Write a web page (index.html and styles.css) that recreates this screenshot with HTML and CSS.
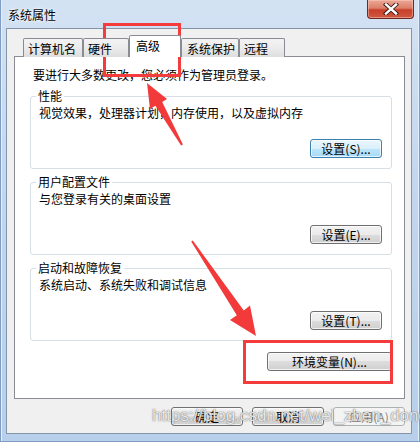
FILE: index.html
```html
<!DOCTYPE html>
<html lang="zh-CN">
    <head>
        <meta charset="UTF-8">
        <title>系统属性</title>
        <link rel="stylesheet" href="styles.css">
    </head>
    <body>
        <div class="window">
            <div class="titlebar">
                <span class="title">系统属性</span>
                <div class="close">
                    <svg width="16" height="12" viewBox="0 0 16 12">
                        <path d="M3 1.5 L13 10.5 M13 1.5 L3 10.5" stroke="#3a1a14" stroke-width="4.2" stroke-linecap="square"/>
                        <path d="M3 1.5 L13 10.5 M13 1.5 L3 10.5" stroke="#ffffff" stroke-width="2.4" stroke-linecap="square"/>
                    </svg>
                </div>
            </div>

            <div class="client">
                <div class="tabs">
                    <div class="tab t1">计算机名</div>
                    <div class="tab t2">硬件</div>
                    <div class="tab t3 active">高级</div>
                    <div class="tab t4">系统保护</div>
                    <div class="tab t5">远程</div>
                </div>

                <div class="panel">
                    <p class="intro">要进行大多数更改，您必须作为管理员登录。</p>

                    <div class="group">
                        <span class="group-title">性能</span>
                        <p class="group-text">视觉效果，处理器计划，内存使用，以及虚拟内存</p>
                        <button class="btn hot">设置(S)...</button>
                    </div>

                    <div class="group">
                        <span class="group-title">用户配置文件</span>
                        <p class="group-text">与您登录有关的桌面设置</p>
                        <button class="btn">设置(E)...</button>
                    </div>

                    <div class="group">
                        <span class="group-title">启动和故障恢复</span>
                        <p class="group-text">系统启动、系统失败和调试信息</p>
                        <button class="btn">设置(T)...</button>
                    </div>

                    <button class="btn env">环境变量(N)...</button>
                </div>

                <div class="footer">
                    <button class="btn">确定</button>
                    <button class="btn">取消</button>
                    <button class="btn disabled">应用(A)</button>
                </div>
            </div>

            <div class="watermark">https://blog.csdn.net/wei_zhen_dong</div>

            <!-- пометки поверх окна -->
            <svg class="marks" width="420" height="442" viewBox="0 0 420 442">
                <rect x="104.5" y="24.5" width="75" height="51" fill="none" stroke="#f53c3c" stroke-width="3"/>
                <rect x="244.5" y="341.5" width="147" height="41" fill="none" stroke="#f53c3c" stroke-width="3"/>
                <polygon fill="#f23a3a" points="147,83 167,99 162.2,102 182.9,144.5 181.1,145.5 155.4,105.8 150,109"/>
                <polygon fill="#f23a3a" points="256,336 250,305.5 243.8,310.4 192.8,240.4 191.2,241.6 236.8,315.2 230,320"/>
            </svg>
        </div>
    </body>
</html>
```

FILE: styles.css
```css
body {
    margin: 0;
    font-family: "Noto Sans CJK SC", sans-serif;
    font-size: 12px;
    background-color: #ffffff;
}
.window {
    position: relative;
    width: 420px;
    height: 442px;
    box-sizing: border-box;
    padding: 0 8px 8px 6px;
    display: flex;
    flex-direction: column;
    background: linear-gradient(180deg, #d3e2f3 0%, #c3d7ee 40%, #b7cfea 100%);
    box-shadow: inset 1px 0 0 #7f9dc2, inset -1px 0 0 #7f9dc2, inset 0 -1px 0 #7f9dc2, inset 2px 0 0 #e6eff9, inset -2px 0 0 #e6eff9;
}
.titlebar {
    height: 28px;
    flex: none;
    display: flex;
    justify-content: space-between;
    align-items: flex-start;
}
.title {
    margin: 7px 0 0 2px;
    line-height: 16px;
    color: #000;
    text-shadow: 0 0 4px #ffffff, 0 0 2px #ffffff;
}
.close {
    width: 47px;
    height: 19px;
    box-sizing: border-box;
    margin-right: -2px;
    border: 1px solid #6e2a22;
    border-top: none;
    border-radius: 0 0 4px 4px;
    background: linear-gradient(180deg, #eaa897 0%, #dc7f69 45%, #c8402a 55%, #cf5a3f 100%);
    box-shadow: inset 0 0 0 1px rgba(255, 210, 200, 0.45);
    display: flex;
    justify-content: center;
    align-items: center;
}
.client {
    flex: 1;
    display: flex;
    flex-direction: column;
    background-color: #f0f0f0;
    border: 1px solid #8495a9;
    padding: 7px 6px 0 7px;
}
.tabs {
    display: flex;
    align-items: flex-end;
    height: 21px;
    padding-left: 9px;
    margin-bottom: -1px;
    position: relative;
    z-index: 1;
}
.tab {
    height: 19px;
    box-sizing: border-box;
    border: 1px solid #898c95;
    border-bottom: none;
    border-radius: 2px 2px 0 0;
    padding: 2px 0 0 4px;
    line-height: 16px;
    background: linear-gradient(180deg, #f3f3f3 0%, #ebebeb 50%, #dedede 100%);
}
.t1 { width: 60px; }
.t2 { width: 46px; }
.t3 { width: 52px; }
.t4 { width: 58px; padding-left: 5px; }
.t5 { width: 46px; }
.tab.active {
    height: 22px;
    padding: 2px 0 0 6px;
    background: #ffffff;
    border-color: #898c95;
}
.panel {
    height: 343px;
    flex: none;
    box-sizing: border-box;
    border: 1px solid #898c95;
    background-color: #ffffff;
    padding: 10px 12px 0 15px;
    display: flex;
    flex-direction: column;
}
.intro {
    margin: 0 0 13px 3px;
    line-height: 16px;
}
.group {
    height: 73px;
    box-sizing: border-box;
    border: 1px solid #d5dfe5;
    border-radius: 3px;
    padding: 0 9px 0 8px;
    margin-bottom: 13px;
    display: flex;
    flex-direction: column;
}
.group-title {
    align-self: flex-start;
    margin: -9px 0 0 -3px;
    padding: 0 2px;
    line-height: 16px;
    background-color: #ffffff;
}
.group-text {
    margin: 1px 0 0 0;
    line-height: 16px;
}
.btn {
    font-family: "Noto Sans CJK SC", sans-serif;
    font-size: 12px;
    line-height: 16px;
    height: 19px;
    width: 72px;
    box-sizing: border-box;
    padding: 0;
    color: #000;
    border: 1px solid #707070;
    border-radius: 3px;
    background: linear-gradient(180deg, #f2f2f2 0%, #ebebeb 50%, #dddddd 50%, #cfcfcf 100%);
    box-shadow: inset 0 0 0 1px rgba(255, 255, 255, 0.7);
}
.group .btn {
    align-self: flex-end;
    margin-top: 18px;
}
.btn.hot {
    border-color: #3c7fb1;
    background: linear-gradient(180deg, #eaf6fd 0%, #d9f0fc 50%, #bee6fd 50%, #a7d9f5 100%);
}
.btn.env {
    align-self: flex-end;
    width: 125px;
    margin: -2px 0 0 0;
}
.btn.disabled {
    color: #838383;
    border-color: #adb2b5;
    background: #f4f4f4;
    box-shadow: none;
}
.footer {
    display: flex;
    justify-content: flex-end;
    gap: 9px;
    margin-top: 8px;
}
.watermark {
    position: absolute;
    left: 152px;
    top: 406px;
    font-family: "Liberation Sans", sans-serif;
    font-size: 17px;
    line-height: 20px;
    color: rgba(255, 255, 255, 0.85);
    text-shadow: 0 0 1px rgba(60, 60, 60, 0.8), 0 0 2px rgba(120, 120, 120, 0.5);
    white-space: nowrap;
}
.marks {
    position: absolute;
    left: 0;
    top: 0;
    pointer-events: none;
}
```
